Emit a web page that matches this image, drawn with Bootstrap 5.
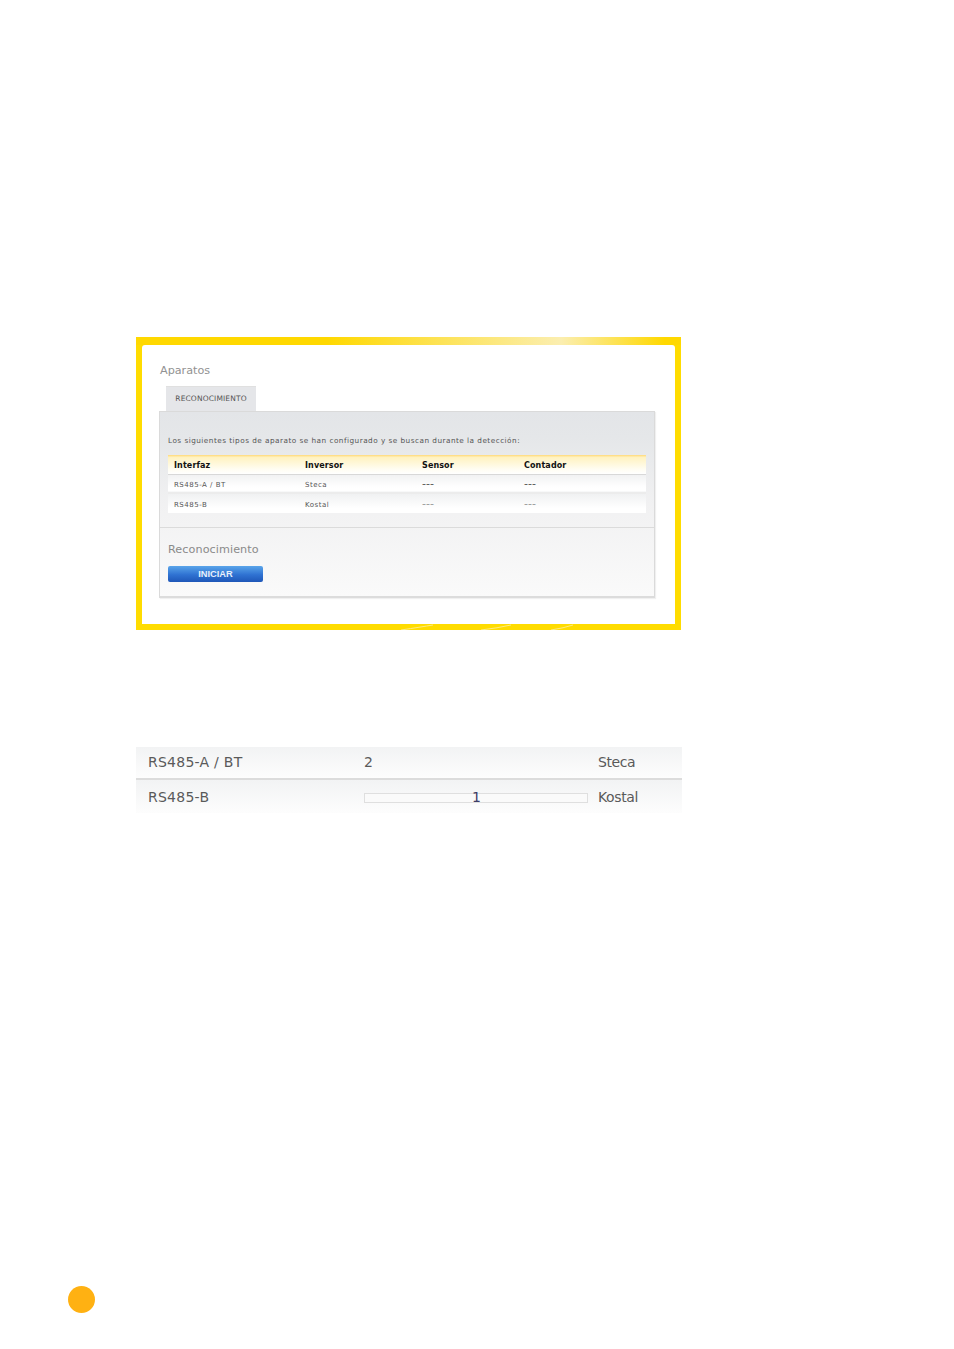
<!DOCTYPE html>
<html lang="es">
<head>
<meta charset="utf-8">
<title>Aparatos</title>
<link href="https://cdn.jsdelivr.net/npm/bootstrap@5.3.0/dist/css/bootstrap.min.css" rel="stylesheet">
<style>
html,body{height:1349px;overflow:hidden;background:#fff}
body{font-family:"DejaVu Sans","Liberation Sans",sans-serif}
.pg{height:1349px;padding-top:337px}
.shot{position:relative;width:545px;height:293px;margin-left:136px;padding:8px 6px 6px 6px;background:linear-gradient(90deg,#ffd800 0%,#ffd800 35%,#fbeeb0 78%,#ffd800 97%) top/100% 8px no-repeat,#ffdc00}
.swoosh{position:absolute;left:0;bottom:0;width:545px;height:6px}
.shot-in{height:100%;background:#fff;border-radius:3px 3px 0 0;padding:18px 20px 0 17px}
.ttl{font-size:11.2px;line-height:16px;color:#929292;margin:0 0 7px 1px;height:16px}
.tabx{width:90px;height:25px;margin-left:7px;background:#e5e6e9;border-top:1px solid #e0e0e0;font-size:7.5px;line-height:24px;text-align:center;color:#555;letter-spacing:.13px}
.pnl{height:187px;border:1px solid #dadada;border-bottom:2px solid #dcdcdc;box-shadow:1px 1px 1px #f0f0f0;background:linear-gradient(180deg,#e3e5e8 0%,#e5e7e9 14%,#f1f1f2 50%,#fafafa 100%)}
.pnl-top{height:116px;padding:23px 8px 0 8px;border-bottom:1px solid #dbdbdb}
.intro{font-size:7.3px;line-height:12px;color:#555;margin:0 0 8px;white-space:nowrap;letter-spacing:.47px}
.dtab{width:478px;table-layout:fixed;border-collapse:collapse;font-size:7px;margin:0}
.dtab th{height:19px;padding:4px 0 0 6px;font-size:8px;letter-spacing:.12px;color:#111;font-weight:700;background:linear-gradient(180deg,#ffd978 0%,#fff2c0 12%,#fffdf2 75%,#fff 100%);border-bottom:1px solid #d8d8d8}
.dtab td{height:19px;padding:4px 0 0 6px;color:#555;letter-spacing:.5px;background:linear-gradient(180deg,#f0f1f2 0%,#fff 75%);white-space:nowrap}
.dtab tr.gap td{border-top:2px solid #ececec;height:20px;padding-top:3px}
.dsh{font-size:11px;letter-spacing:0;line-height:7px;color:#555}
.dsh-dim{color:#9a9a9a}
.pnl-bot{padding:14px 8px 0 8px}
.rec{font-size:11.2px;line-height:16px;color:#8a8a8a;margin:0 0 8px;letter-spacing:.08px}
.go{display:block;width:95px;height:16px;padding:0;border:0;border-radius:2px;background:linear-gradient(180deg,#5aa5ea 0%,#2f72d2 55%,#1f57b8 100%);color:#e8f0fb;font-family:"Liberation Sans",sans-serif;font-size:9.3px;font-weight:700;line-height:16px;text-align:center}
.lst{width:546px;margin:117px 0 0 136px;font-size:14px;color:#5a5a5a}
.lst-row{display:flex;align-items:center;background:linear-gradient(180deg,#f2f3f4 0%,#fdfdfd 100%)}
.lst-a{height:33px;border-bottom:2px solid #dcdcdc}
.lst-b{height:33px;padding-top:1px}
.c1{width:228px;padding-left:12px;letter-spacing:.25px}
.c2{width:234px}
.c3{letter-spacing:-.4px}
.meter{display:block;width:224px;height:10px;margin-top:2px;border:1px solid #dfdfdf;background:#fafafa;position:relative}
.meter-n{position:absolute;left:107px;top:-6px;line-height:19px;color:#3d3d66}
.dot{width:27px;height:27px;border-radius:50%;background:#ffb112;margin:473px 0 0 68px}
</style>
</head>
<body>
<div class="pg">
  <div class="shot">
    <div class="shot-in">
      <div class="ttl">Aparatos</div>
      <div class="tabx">RECONOCIMIENTO</div>
      <div class="pnl">
        <div class="pnl-top">
          <p class="intro">Los siguientes tipos de aparato se han configurado y se buscan durante la detección:</p>
          <table class="dtab">
            <colgroup><col style="width:131px"><col style="width:117px"><col style="width:102px"><col></colgroup>
            <thead><tr><th>Interfaz</th><th>Inversor</th><th>Sensor</th><th>Contador</th></tr></thead>
            <tbody>
              <tr><td>RS485-A / BT</td><td>Steca</td><td><span class="dsh">---</span></td><td><span class="dsh">---</span></td></tr>
              <tr class="gap"><td>RS485-B</td><td>Kostal</td><td><span class="dsh dsh-dim">---</span></td><td><span class="dsh dsh-dim">---</span></td></tr>
            </tbody>
          </table>
        </div>
        <div class="pnl-bot">
          <div class="rec">Reconocimiento</div>
          <button type="button" class="btn go">INICIAR</button>
        </div>
      </div>
    </div>
    <svg class="swoosh" viewBox="0 0 545 6" aria-hidden="true"><path d="M265 6Q285 3 297 1M345 6Q362 4 375 1M415 6Q428 4 437 1" stroke="#ffeb80" stroke-width="1" fill="none"/></svg>
  </div>
  <div class="lst">
    <div class="lst-row lst-a"><div class="c1">RS485-A / BT</div><div class="c2">2</div><div class="c3">Steca</div></div>
    <div class="lst-row lst-b"><div class="c1">RS485-B</div><div class="c2"><span class="meter"><span class="meter-n">1</span></span></div><div class="c3">Kostal</div></div>
  </div>
  <div class="dot"></div>
</div>
<script src="https://cdn.jsdelivr.net/npm/bootstrap@5.3.0/dist/js/bootstrap.bundle.min.js"></script>
</body>
</html>
